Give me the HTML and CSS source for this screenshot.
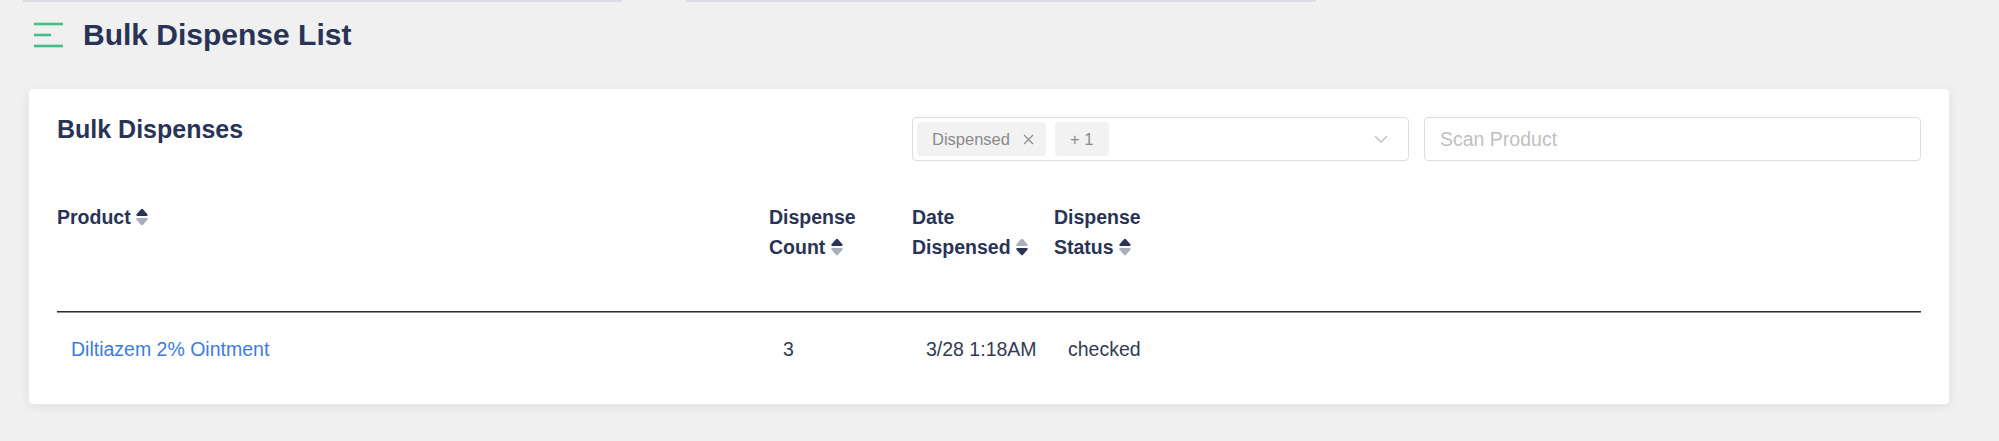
FILE: index.html
```html
<!DOCTYPE html>
<html lang="en">
<head>
<meta charset="utf-8">
<title>Bulk Dispense List</title>
<link rel="stylesheet" href="styles.css">
</head>
<body>
<div class="topbar">
  <span class="topbar-seg seg-a"></span>
  <span class="topbar-seg seg-b"></span>
</div>

<header class="page-header">
  <svg class="menu-icon" width="30" height="26" viewBox="0 0 30 26" aria-hidden="true">
    <line x1="0" y1="2" x2="29" y2="2" />
    <line x1="0" y1="13" x2="17" y2="13" />
    <line x1="0" y1="24" x2="29" y2="24" />
  </svg>
  <h1 class="page-title">Bulk Dispense List</h1>
</header>

<section class="card">
  <div class="card-head">
    <h2 class="card-title">Bulk Dispenses</h2>
    <div class="filters">
      <div class="select">
        <div class="chips">
          <span class="chip">Dispensed
            <svg class="chip-x" width="11" height="11" viewBox="0 0 11 11" aria-hidden="true">
              <path d="M1 1 L10 10 M10 1 L1 10" />
            </svg>
          </span>
          <span class="chip chip-more">+ 1</span>
        </div>
        <svg class="chevron" width="14" height="8" viewBox="0 0 14 8" aria-hidden="true">
          <path d="M1 1 L7 7 L13 1" />
        </svg>
      </div>
      <input class="scan" type="text" placeholder="Scan Product">
    </div>
  </div>

  <div class="table">
    <div class="thead">
      <div class="th">Product <svg class="sort" width="12" height="18" viewBox="0 0 12 18"><path class="on" d="M5 1.2 Q6 0.2 7 1.2 L11.6 6.6 Q12 8 10.6 8 L1.4 8 Q0 8 0.4 6.6 Z"/><path class="off" d="M1.4 10 L10.6 10 Q12 10 11.6 11.4 L7 16.8 Q6 17.8 5 16.8 L0.4 11.4 Q0 10 1.4 10 Z"/></svg></div>
      <div class="th">Dispense Count <svg class="sort" width="12" height="18" viewBox="0 0 12 18"><path class="on" d="M5 1.2 Q6 0.2 7 1.2 L11.6 6.6 Q12 8 10.6 8 L1.4 8 Q0 8 0.4 6.6 Z"/><path class="off" d="M1.4 10 L10.6 10 Q12 10 11.6 11.4 L7 16.8 Q6 17.8 5 16.8 L0.4 11.4 Q0 10 1.4 10 Z"/></svg></div>
      <div class="th">Date Dispensed <svg class="sort" width="12" height="18" viewBox="0 0 12 18"><path class="off" d="M5 1.2 Q6 0.2 7 1.2 L11.6 6.6 Q12 8 10.6 8 L1.4 8 Q0 8 0.4 6.6 Z"/><path class="on" d="M1.4 10 L10.6 10 Q12 10 11.6 11.4 L7 16.8 Q6 17.8 5 16.8 L0.4 11.4 Q0 10 1.4 10 Z"/></svg></div>
      <div class="th">Dispense Status <svg class="sort" width="12" height="18" viewBox="0 0 12 18"><path class="on" d="M5 1.2 Q6 0.2 7 1.2 L11.6 6.6 Q12 8 10.6 8 L1.4 8 Q0 8 0.4 6.6 Z"/><path class="off" d="M1.4 10 L10.6 10 Q12 10 11.6 11.4 L7 16.8 Q6 17.8 5 16.8 L0.4 11.4 Q0 10 1.4 10 Z"/></svg></div>
      <div class="th"></div>
    </div>
    <div class="tr">
      <div class="td"><a class="link" href="#">Diltiazem 2% Ointment</a></div>
      <div class="td">3</div>
      <div class="td">3/28 1:18AM</div>
      <div class="td">checked</div>
      <div class="td"></div>
    </div>
  </div>
</section>
</body>
</html>
```

FILE: styles.css
```css
* {
  box-sizing: border-box;
}

html, body {
  margin: 0;
  padding: 0;
}

body {
  background: #f0f0f0;
  font-family: "Liberation Sans", Arial, Helvetica, sans-serif;
  color: #293356;
  width: 1999px;
  height: 441px;
  overflow: hidden;
}

.topbar {
  display: flex;
  height: 2px;
  padding-left: 23px;
  gap: 64px;
}

.topbar-seg {
  display: block;
  height: 2px;
  background: #dddce5;
}

.seg-a { width: 599px; }
.seg-b { width: 630px; }

.page-header {
  display: flex;
  align-items: center;
  gap: 19px;
  height: 36px;
  margin-top: 15px;
  padding-left: 34px;
}

.menu-icon line {
  stroke: #3fbf86;
  stroke-width: 2.6;
}

.page-title {
  margin: 0;
  font-size: 30px;
  line-height: 36px;
  font-weight: 700;
  color: #293356;
}

.card {
  margin: 35px 49px 0 28px;
  background: #ffffff;
  border: 1px solid #ebebf0;
  border-radius: 5px;
  box-shadow: 0 2px 10px rgba(0, 0, 0, 0.07);
  padding: 28px 28px 18px 28px;
}

.card-head {
  display: flex;
  justify-content: space-between;
  align-items: flex-start;
}

.card-title {
  margin: 0;
  font-size: 25px;
  line-height: 24px;
  font-weight: 700;
  color: #293356;
}

.filters {
  display: flex;
  gap: 15px;
}

.select {
  width: 497px;
  height: 44px;
  border: 1px solid #dcdce4;
  border-radius: 4px;
  padding: 4px 20px 4px 4px;
  display: flex;
  align-items: center;
  justify-content: space-between;
  background: #fff;
}

.chips {
  display: flex;
  gap: 9px;
}

.chip {
  display: inline-flex;
  align-items: center;
  height: 34px;
  padding: 0 12px 0 15px;
  background: #f2f2f2;
  border-radius: 4px;
  font-size: 16.5px;
  color: #8a8a8a;
  gap: 13px;
}

.chip-more {
  padding: 0 16px 0 15px;
}

.chip-x path {
  stroke: #8f8f8f;
  stroke-width: 1.2;
  fill: none;
}

.chevron path {
  stroke: #bdbdbd;
  stroke-width: 1.3;
  fill: none;
}

.scan {
  width: 497px;
  height: 44px;
  border: 1px solid #dcdce4;
  border-radius: 4px;
  padding: 0 15px;
  font-family: "Liberation Sans", Arial, Helvetica, sans-serif;
  font-size: 19.5px;
  color: #333;
  background: #fff;
  outline: none;
}

.scan::placeholder {
  color: #bfbfbf;
}

.table {
  margin-top: 41px;
}

.thead,
.tr {
  display: grid;
  grid-template-columns: 712px 143px 142px 142px 1fr;
}

.thead {
  border-bottom: 1px solid #2e2e2e;
  box-shadow: 0 1px 0 #8f8f8f;
  padding-bottom: 49px;
}

.th {
  font-size: 19.5px;
  line-height: 30px;
  font-weight: 700;
  color: #293356;
  padding-right: 8px;
}

.sort {
  vertical-align: -2px;
}

.sort .on {
  fill: #293356;
}

.sort .off {
  fill: #a9adbc;
}

.tr {
  padding-top: 1px;
}

.td {
  font-size: 19.5px;
  line-height: 27px;
  color: #333a52;
  padding: 23px 8px 23px 14px;
}

.link {
  color: #3b7ddd;
  text-decoration: none;
}
```
